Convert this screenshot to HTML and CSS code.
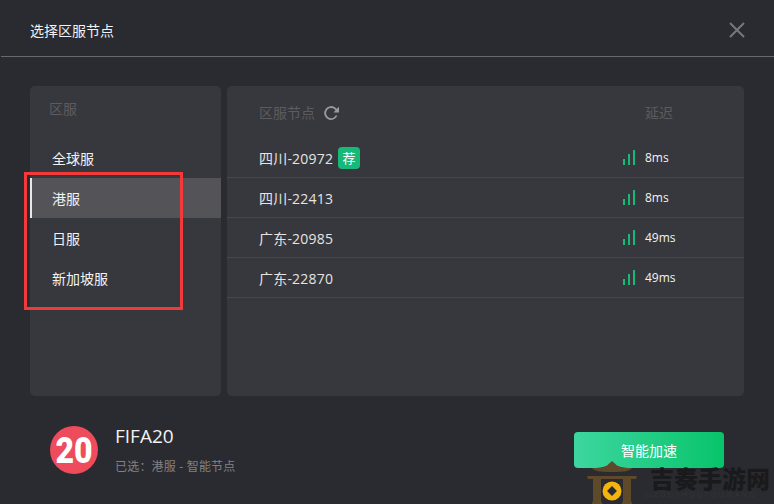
FILE: index.html
```html
<!DOCTYPE html>
<html lang="zh-CN">

<head>
    <meta charset="utf-8">
    <title>选择区服节点</title>
    <link rel="stylesheet" href="styles.css">
</head>

<body>
    <div class="dialog">
        <header class="dialog-head">
            <span class="dialog-title">选择区服节点</span>
            <svg class="close-icon" width="16" height="16" viewBox="0 0 16 16">
                <path d="M1 1L15 15M15 1L1 15" />
            </svg>
        </header>

        <main class="panels">
            <section class="panel region-panel">
                <div class="region-head">区服</div>
                <ul class="region-list">
                    <li class="region-item">全球服</li>
                    <li class="region-item active">港服</li>
                    <li class="region-item">日服</li>
                    <li class="region-item">新加坡服</li>
                </ul>
            </section>

            <section class="panel node-panel">
                <div class="node-head">
                    <span class="node-head-name">区服节点
                        <svg class="refresh-icon" width="17" height="16" viewBox="0 0 17 16">
                            <path d="M13.6 10.500A6 6 0 1 1 12.200 3.600L14 5.400" />
                            <path class="refresh-tip" d="M16 1.600V7.400H10.400Z" />
                        </svg>
                    </span>
                    <span class="node-head-delay">延迟</span>
                </div>
                <ul class="node-list">
                    <li class="node-row">
                        <span class="node-name">四川-20972<span class="tag">荐</span></span>
                        <span class="signal"><i></i><i></i><i></i></span>
                        <span class="delay">8ms</span>
                    </li>
                    <li class="node-row">
                        <span class="node-name">四川-22413</span>
                        <span class="signal"><i></i><i></i><i></i></span>
                        <span class="delay">8ms</span>
                    </li>
                    <li class="node-row">
                        <span class="node-name">广东-20985</span>
                        <span class="signal"><i></i><i></i><i></i></span>
                        <span class="delay">49ms</span>
                    </li>
                    <li class="node-row">
                        <span class="node-name">广东-22870</span>
                        <span class="signal"><i></i><i></i><i></i></span>
                        <span class="delay">49ms</span>
                    </li>
                </ul>
            </section>
        </main>

        <footer class="dialog-foot">
            <div class="game-logo"><span class="game-logo-num">20</span></div>
            <div class="game-info">
                <div class="game-name">FIFA20</div>
                <div class="game-picked">已选：港服 - 智能节点</div>
            </div>
            <button class="boost-btn">智能加速</button>
        </footer>
    </div>

    <div class="highlight-box"></div>

    <div class="watermark">
        <svg class="watermark-icon" width="50" height="44" viewBox="0 0 50 44">
            <path class="gate" d="M25 0L30 4.500C34 6.500 40 7 45 7C43 10 38 11 25 11C12 11 7 10 5 7C10 7 16 6.500 20 4.500Z" />
            <path class="gate" d="M0 15H50L49 18H44V40L46 44H34L36 40V18H14V40L16 44H4L6 40V18H1Z" />
            <circle class="coin" cx="25" cy="30" r="9.500" />
            <rect class="coin-hole" x="21.500" y="26.500" width="7" height="7" transform="rotate(45 25 30)" />
        </svg>
        <div class="watermark-text">
            <div class="watermark-name">吉奏手游网</div>
            <div class="watermark-sub">JIZOUSHOUYOUWANG</div>
        </div>
    </div>
</body>

</html>
```

FILE: styles.css
```css
:root {
    --page-bg: #2a2b30;
    --panel-bg: #37383d;
    --line: #46474c;
    --muted: #5b5c61;
    --green: #17b978;
}

* {
    box-sizing: border-box;
}

html,
body {
    height: 100%;
}

body {
    margin: 0;
    overflow: hidden;
    background: var(--page-bg);
    color: #f2f2f2;
    font-family: "Open Sans", "Noto Sans CJK SC", sans-serif;
    font-size: 14px;
}

ul {
    margin: 0;
    padding: 0;
    list-style: none;
}

.dialog {
    height: 504px;
    display: flex;
    flex-direction: column;
}

.dialog-head {
    height: 57px;
    margin-left: 1px;
    padding: 4px 29px 0 29px;
    display: flex;
    align-items: center;
    justify-content: space-between;
    border-bottom: 1px solid #68696c;
    flex: none;
}

.dialog-title {
    font-size: 14px;
}

.close-icon path {
    stroke: #77787b;
    stroke-width: 2;
    fill: none;
}

.panels {
    height: 339px;
    padding: 29px 30px 0;
    display: flex;
    gap: 6px;
    flex: none;
}

.panel {
    background: var(--panel-bg);
    border-radius: 5px;
}

.region-panel {
    width: 191px;
    flex: none;
}

.region-head {
    height: 52px;
    padding: 12px 20px 0 19px;
    color: var(--muted);
    line-height: 22px;
}

.region-item {
    height: 40px;
    padding-left: 22px;
    line-height: 42px;
}

.region-item.active {
    padding-left: 20px;
    border-left: 2px solid #e8e8e8;
    background: #545458;
}

.node-panel {
    flex: 1;
}

.node-head {
    height: 52px;
    padding: 16px 71px 0 32px;
    display: flex;
    align-items: flex-start;
    justify-content: space-between;
    color: var(--muted);
    line-height: 22px;
}

.node-head-name {
    display: flex;
    align-items: center;
    gap: 8px;
}

.refresh-icon path {
    fill: none;
    stroke: #9a9b9e;
    stroke-width: 1.800;
}

.refresh-icon .refresh-tip {
    fill: #9a9b9e;
    stroke: none;
}

.node-row {
    height: 40px;
    padding: 1px 0 0 32px;
    display: flex;
    align-items: center;
    border-bottom: 1px solid var(--line);
}

.node-name {
    width: 364px;
    display: flex;
    align-items: center;
    color: #e4e4e4;
    letter-spacing: 0.200px;
}

.tag {
    width: 22px;
    height: 22px;
    margin-left: 5px;
    border-radius: 4px;
    background: var(--green);
    color: #fff;
    font-size: 13px;
    line-height: 22px;
    text-align: center;
}

.signal {
    width: 22px;
    height: 15px;
    margin-top: -1px;
    display: flex;
    align-items: flex-end;
    gap: 3px;
    flex: none;
}

.signal i {
    width: 2px;
    background: var(--green);
}

.signal i:nth-child(1) {
    height: 6px;
}

.signal i:nth-child(2) {
    height: 11px;
}

.signal i:nth-child(3) {
    height: 15px;
}

.delay {
    margin-bottom: 2px;
    font-size: 12px;
}

.dialog-foot {
    flex: 1;
    padding: 0 50px 0 50px;
    display: flex;
    align-items: flex-start;
}

.game-logo {
    width: 48px;
    height: 48px;
    margin-top: 30px;
    border-radius: 50%;
    background: #ee4b5c;
    color: #fff;
    font-family: "Roboto", sans-serif;
    font-size: 32px;
    font-weight: 900;
    line-height: 48px;
    text-align: center;
    flex: none;
}

.game-logo-num {
    display: inline-block;
    transform: scaleY(1.180);
}

.game-info {
    margin-left: 17px;
    margin-top: 27px;
    flex: 1;
}

.game-name {
    font-size: 19px;
    line-height: 26px;
}

.game-picked {
    margin-top: 9px;
    color: #818286;
    font-size: 12px;
    line-height: 18px;
    letter-spacing: 0.200px;
}

.boost-btn {
    width: 150px;
    height: 36px;
    margin-top: 36px;
    border: 0;
    border-radius: 4px;
    background: linear-gradient(90deg, #3dd6a0, #08c46a);
    color: #fff;
    font-family: inherit;
    font-size: 14px;
    flex: none;
}

/* annotation drawn over the screenshot */
.highlight-box {
    position: absolute;
    left: 24px;
    top: 172px;
    width: 159px;
    height: 138px;
    border: 3px solid #f23a3a;
}

.watermark {
    position: absolute;
    left: 587px;
    top: 461px;
    display: flex;
    gap: 8px;
}

.gate {
    fill: #5e4a2a;
}

.coin {
    fill: #f4b40e;
}

.coin-hole {
    fill: #2a2b30;
}

.watermark-text {
    padding-top: 4px;
}

.watermark-name {
    padding-left: 5px;
    color: #1a1a1c;
    font-family: "Noto Sans CJK SC", serif;
    font-size: 24px;
    font-weight: 900;
    line-height: 26px;
    white-space: nowrap;
}

.watermark-sub {
    color: #333438;
    font-size: 7px;
    letter-spacing: 2.400px;
    line-height: 8px;
    white-space: nowrap;
}
```
